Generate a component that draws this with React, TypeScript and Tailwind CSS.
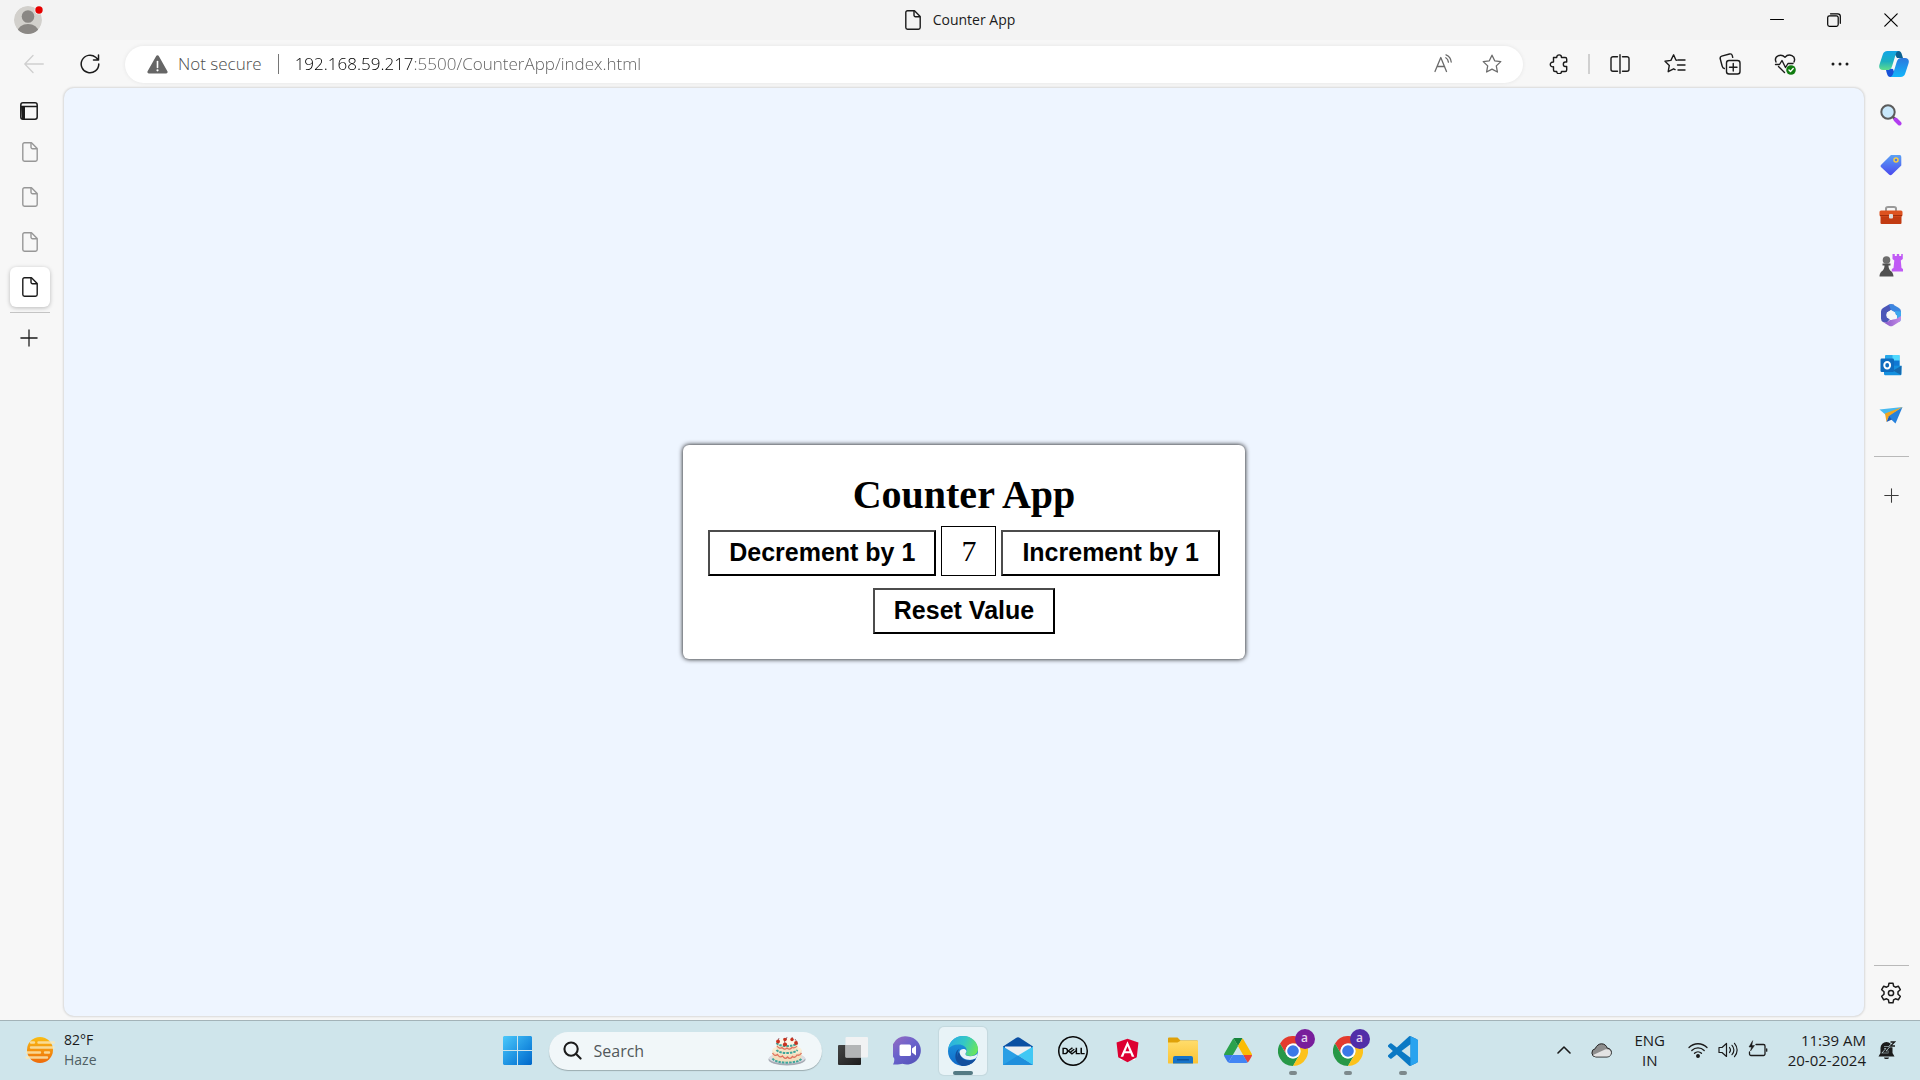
import { useState, type ReactNode } from "react";
import { FaAngular } from "react-icons/fa";
import { SiDell } from "react-icons/si";

function Line({ children, size = 20, w = 1.3, box = 20, label }: { children: ReactNode; size?: number; w?: number; box?: number; label?: string }) {
  return (
    <svg width={size} height={size} viewBox={`0 0 ${box} ${box}`} fill="none" stroke="currentColor" strokeWidth={w} strokeLinecap="round" strokeLinejoin="round" aria-label={label}>
      {children}
    </svg>
  );
}

const STAR = "M10 1.200l2.700 5.600 6.100.8-4.500 4.300 1.100 6.100L10 15.100 4.600 18l1.100-6.100L1.200 7.600l6.100-.8z";

function PageIcon() {
  return (
    <svg width="16" height="20" viewBox="0 0 16 20" fill="none" stroke="currentColor" strokeWidth="1.4" strokeLinejoin="round" aria-hidden="true">
      <path d="M2.500.8h7L15.200 6.500v11a1.700 1.700 0 0 1-1.700 1.700h-11A1.700 1.700 0 0 1 .8 17.500v-15A1.700 1.700 0 0 1 2.500.8z" />
      <path d="M9 1v4.300A1.500 1.500 0 0 0 10.500 6.800H15" />
    </svg>
  );
}

function PlusIcon({ size }: { size: number }) {
  return <Line size={size} w={1.4}><path d="M10 1v18M1 10h18" /></Line>;
}

function TitleBar() {
  return (
    <header className="grid h-10 shrink-0 grid-cols-[1fr_auto_1fr] items-center bg-[#f3f3f3]">
      <button aria-label="Profile" className="ml-3.5 w-8">
        <svg width="32" height="32" viewBox="0 0 32 32">
          <defs><clipPath id="avatar"><circle cx="14" cy="16" r="14" /></clipPath></defs>
          <g clipPath="url(#avatar)">
            <circle cx="14" cy="16" r="14" fill="#d2d0cc" />
            <circle cx="14" cy="12.500" r="6.300" fill="#8a8784" />
            <ellipse cx="14" cy="28" rx="10.500" ry="8" fill="#8a8784" />
          </g>
          <circle cx="25" cy="6" r="4.500" fill="#f3f3f3" />
          <circle cx="25" cy="6" r="3.700" fill="#e60000" />
        </svg>
      </button>
      <div className="flex items-center gap-3 text-[#1b1b1b]">
        <PageIcon />
        <span className="text-sm">Counter App</span>
      </div>
      <div className="flex justify-end pr-px">
        <button aria-label="Minimize" className="flex h-10 w-[57px] items-center justify-center"><Line size={14} box={14} w={1}><path d="M.5 6.500h13" /></Line></button>
        <button aria-label="Restore" className="flex h-10 w-[57px] items-center justify-center">
          <Line size={14} box={14} w={1.200}><rect x=".7" y="2.800" width="10.500" height="10.500" rx="1.800" /><path d="M3.500.8h7.300a2.500 2.500 0 0 1 2.500 2.500v7" /></Line>
        </button>
        <button aria-label="Close" className="flex h-10 w-[57px] items-center justify-center"><Line size={14} box={14} w={1.200}><path d="M.8.8l12.400 12.400M13.200.8L.8 13.200" /></Line></button>
      </div>
    </header>
  );
}

function ToolButton({ label, children }: { label: string; children: ReactNode }) {
  return <button aria-label={label} className="flex h-9 w-[55px] items-center justify-center text-[#1b1b1b]">{children}</button>;
}

function Toolbar() {
  return (
    <nav className="flex h-12 shrink-0 items-center bg-[#f7f7f7]">
      <button aria-label="Back" className="ml-1.5 flex w-14 justify-center text-[#cfcfcf]"><Line w={1.300}><path d="M19.300 10H.8M9 1.500L.8 10 9 18.500" /></Line></button>
      <button aria-label="Refresh" className="flex w-14 justify-center text-[#1b1b1b]"><Line w={1.500}><path d="M18.800 10A8.800 8.800 0 1 1 15.700 3.300L18.500 6M18.500 1v5h-5" /></Line></button>
      <div className="ml-[7px] flex h-[37px] flex-1 items-center rounded-full bg-white shadow-[0_0_4px_rgba(0,0,0,0.08)]">
        <button className="ml-[22px] flex items-center gap-2.5 text-[17px] font-light text-[#4d4d4d]">
          <svg width="21" height="19" viewBox="0 0 21 19" aria-hidden="true">
            <path d="M9.200 1.100a1.500 1.500 0 0 1 2.600 0l8.600 15.200a1.500 1.500 0 0 1-1.300 2.200H1.900A1.500 1.500 0 0 1 .6 16.300z" fill="#666" />
            <path d="M10.500 6.500v6" stroke="#fff" strokeWidth="1.600" strokeLinecap="round" /><circle cx="10.500" cy="15.300" r="1.100" fill="#fff" />
          </svg>
          Not secure
        </button>
        <span className="mx-4 h-5 w-px bg-[#767676]" />
        <input
          aria-label="Address"
          defaultValue="192.168.59.217:5500/CounterApp/index.html"
          className="min-w-0 flex-1 bg-[linear-gradient(to_right,#000_118px,#5c5c5c_118px)] bg-clip-text text-[17px] font-light text-transparent outline-none"
        />
        <button aria-label="Read aloud" className="flex w-12 justify-center text-[#6b6b6b]">
          <Line w={1.300}><path d="M1 17.500L6.800 3.500 12.500 17.500M3 12.500h7.600" /><path d="M11.800 3.800c1.700 1 2.400 2.500 2.600 4.300M12 .8c2.900 1.200 4.900 3.500 5.200 7.200" /></Line>
        </button>
        <button aria-label="Add to favorites" className="mr-[7px] flex w-12 justify-center text-[#6b6b6b]"><Line w={1.300}><path d={STAR} /></Line></button>
      </div>
      <div className="ml-2 flex items-center">
        <ToolButton label="Extensions">
          <Line w={1.400}><path d="M4.500 3.500h3.200c0-3.500 4.800-3.500 4.800 0h3.700a1.500 1.500 0 0 1 1.500 1.500v3h-1.500c-2.500 0-2.500 4.500 0 4.500h1.500V16a1.500 1.500 0 0 1-1.500 1.500h-3.700c0 3-4.800 3-4.800 0H6A1.500 1.500 0 0 1 4.500 16v-3.200c-4.300.6-4.300-5.200 0-4.800z" /></Line>
        </ToolButton>
        <span className="mx-0.5 h-5 w-0.5 bg-[#d0d0d0]" />
        <ToolButton label="Split screen"><Line w={1.400}><path d="M7.500 2.700H3A2 2 0 0 0 1 4.700v10.600a2 2 0 0 0 2 2h4.500M12.500 2.700H17a2 2 0 0 1 2 2v10.600a2 2 0 0 1-2 2h-4.500M10 .8v18.400" /></Line></ToolButton>
        <ToolButton label="Favorites">
          <Line size={22} box={22} w={1.400}><path d="M13 7.200L11.900 7 9.600 1.800 6.900 7.400l-5.900.8 4.300 4.200-1.100 6.300 5.400-2.900 1.500.8" /><path d="M14 7h7M13.500 12H21M14 17h7" /></Line>
        </ToolButton>
        <ToolButton label="Collections">
          <Line size={22} box={22} w={1.400}><rect x="7.500" y="7.500" width="13.500" height="13.500" rx="2.500" /><path d="M14.250 10.500v7.500M10.500 14.250H18M5.300 15.500c-1.300-.3-1.800-1-2.100-2.300L1.200 5.800c-.3-1.400.2-2.300 1.500-2.700l7.800-2.100c1.400-.4 2.400.2 2.800 1.600l.4 1.700" /></Line>
        </ToolButton>
        <ToolButton label="Browser essentials">
          <Line size={22} box={22} w={1.400}>
            <path d="M2 9C-.5 3 7 .2 11 4.200 15-.2 22.500 3 20 9M4.500 13.500l6 6M1.500 11.500h4l2.500-4 3.500 7 2.500-4h5" />
            <circle cx="17" cy="17" r="4.800" fill="#107c10" stroke="none" /><path d="M15 17l1.500 1.500 2.700-2.900" stroke="#fff" />
          </Line>
        </ToolButton>
        <ToolButton label="Settings and more"><svg width="20" height="20" viewBox="0 0 20 20" fill="currentColor"><circle cx="3" cy="10" r="1.500" /><circle cx="10" cy="10" r="1.500" /><circle cx="17" cy="10" r="1.500" /></svg></ToolButton>
        <button aria-label="Copilot" className="flex w-[53px] justify-center">
          <svg width="30" height="28" viewBox="0 0 30 28">
            <defs>
              <linearGradient id="cp1" x1="0" y1="0" x2="0" y2="1"><stop stopColor="#12a5e6" /><stop offset=".55" stopColor="#1db0c0" /><stop offset="1" stopColor="#5fdd8b" /></linearGradient>
              <linearGradient id="cp2" x1="0" y1="0" x2="0" y2="1"><stop stopColor="#2d78dd" /><stop offset="1" stopColor="#12b6fb" /></linearGradient>
            </defs>
            <path d="M14 1h5.500c2 0 2.800 1.500 3.400 3.500L24 8h-6z" fill="#0c6191" />
            <path d="M8 20c1 0 2-.4 2.400-1.600L14 19l3 8h-5.500c-2.500 0-3.200-2-3.900-4.500L7 20z" fill="#1752d8" />
            <path d="M8.500 1H20c-1.700 0-2.700 1.200-3.300 3.200l-3.500 11.500C12.300 18.600 11 20 8.500 20H4c-3.200 0-4.500-2.400-3.500-5.500L3.700 4.700C4.500 2.200 6 1 8.500 1z" fill="url(#cp1)" />
            <path d="M21.500 27H10.800c1.700 0 2.700-1.200 3.300-3.200l3.500-11.500c.8-2.900 2.300-4.300 4.700-4.300H26c3.200 0 4.500 2.400 3.500 5.500l-3.200 9.800c-.8 2.500-2.300 3.700-4.800 3.700z" fill="url(#cp2)" />
          </svg>
        </button>
      </div>
    </nav>
  );
}

function TabRail() {
  return (
    <aside className="flex w-16 shrink-0 flex-col items-center pr-1 text-[#1b1b1b]">
      <button aria-label="Tab actions" className="mt-3.5 mr-0.5">
        <svg width="18" height="18" viewBox="0 0 18 18" fill="none" stroke="currentColor" strokeWidth="1.500"><rect x=".8" y=".8" width="16.400" height="16.400" rx="2.200" /><path d="M1 4.500h16" /><path d="M1 4.500h4v12.700H2z" fill="currentColor" stroke="none" /></svg>
      </button>
      <div className="mt-3 flex flex-col gap-[5px]">
        {[1, 2, 3].map((n) => (
          <button key={n} aria-label={`Tab ${n}`} className="flex size-10 items-center justify-center text-[#979797]"><PageIcon /></button>
        ))}
        <button aria-label="Counter App tab" className="flex size-10 items-center justify-center rounded-md bg-white shadow-[0_1px_4px_rgba(0,0,0,0.25)]"><PageIcon /></button>
      </div>
      <span className="mt-[5px] h-px w-10 bg-[#c4c4c4]" />
      <button aria-label="New tab" className="mt-4 mr-0.5"><PlusIcon size={18} /></button>
    </aside>
  );
}

function CounterCard() {
  const [value, setValue] = useState(7);
  const button = "h-[46px] border-2 border-t-[#4c4c4c] border-r-black border-b-black border-l-[#4c4c4c] bg-white px-[19px] pb-0.5 font-['Liberation_Sans',sans-serif] text-[25px] leading-8 font-bold text-black";
  return (
    <section className="flex flex-col items-center rounded-[6px] bg-white p-[25px] font-['Liberation_Serif',serif] text-black shadow-[0_0_5px_black]">
      <h1 className="text-[40px] leading-[50px] font-bold">Counter App</h1>
      <div className="mt-1.5 flex items-end gap-[5px]">
        <button className={button} onClick={() => setValue(value - 1)}>Decrement by 1</button>
        <output className="flex h-[50px] items-center border border-black px-[19px] pb-0.5 text-[30px]">{value}</output>
        <button className={button} onClick={() => setValue(value + 1)}>Increment by 1</button>
      </div>
      <button className={`${button} mt-3`} onClick={() => setValue(0)}>Reset Value</button>
    </section>
  );
}

function SearchTool() {
  return (
    <svg width="22" height="22" viewBox="0 0 22 22">
      <path d="M13 13l2 2" stroke="#555" strokeWidth="2.500" /><path d="M15.500 15.500l4 4" stroke="#b23df0" strokeWidth="4" strokeLinecap="round" />
      <circle cx="8" cy="8" r="6.700" fill="#c9e8fb" stroke="#5b5b5b" strokeWidth="2" />
    </svg>
  );
}
function ShoppingTag() {
  return (
    <svg width="22" height="22" viewBox="0 0 22 22">
      <defs><linearGradient id="tag" x2="0" y2="1"><stop stopColor="#5ba1f5" /><stop offset="1" stopColor="#4a49ee" /></linearGradient></defs>
      <path d="M11 1h8.500A1.800 1.800 0 0 1 21.300 3v8.500L12 20.500c-1 1-2 1-3 0L1.200 13.300c-.8-.8-.8-1.700 0-2.500z" fill="url(#tag)" /><circle cx="16" cy="6" r="2" fill="#5578df" stroke="#f7cd43" strokeWidth="1.500" />
    </svg>
  );
}
function Toolbox() {
  return (
    <svg width="24" height="20" viewBox="0 0 24 20">
      <path d="M7 6V3.500Q7 2 9 2h6q2 0 2 1.500V6" fill="none" stroke="#9a9a9a" strokeWidth="2" /><rect x="1.500" y="10" width="21" height="9" rx="1" fill="#c23b12" />
      <rect x=".5" y="5.500" width="23" height="6" rx="1.500" fill="#dd5220" /><path d="M1 10.500h22" stroke="#a42f0c" /><rect x="10" y="9" width="4" height="4.500" rx="1" fill="#ddd" />
    </svg>
  );
}
function Games() {
  return (
    <svg width="24" height="24" viewBox="0 0 24 24">
      <path d="M13.500 1h2.300v2h2V1h2.400v2h2V1h1.600v5l-2 1.500L22.500 15l1.500 1v2.500H12.800V16l1.700-1 .8-7.500-1.800-1.500z" fill="#c05af5" />
      <circle cx="7.500" cy="7" r="3.800" fill="#6d6d6d" /><path d="M3.500 10.500h8v2h-2c.2 3.500 1 4.500 3.500 6.500.7 1.500 1.500 2.500 1.500 4.500H.5c0-2 .6-3 1.500-4.500 2.500-2 3.300-3 3.500-6.500h-2z" fill="#505050" />
    </svg>
  );
}
function Office() {
  return (
    <svg width="22" height="24" viewBox="0 0 22 24">
      <defs><linearGradient id="off" x2="1" y2="0"><stop stopColor="#8457c8" /><stop offset="1" stopColor="#c58be6" /></linearGradient></defs>
      <path d="M9 1.500L3 5Q1 6.200 1 8.500v7q0 2.300 2 3.500l4 .5 3-3.500-4-4 5-5L14 1.500z" fill="#4b56b8" />
      <path d="M9 1.500q2-1 4 0l6 3.500q2 1.200 2 3.500v3l-4 1-6-5z" fill="#3d86e0" />
      <path d="M14 8l3 4v6l2 1q2-1.200 2-3.500v-7z" fill="#3da9ee" />
      <path d="M21 13v2.500q0 2.300-2 3.500l-6 3.700q-2 1-4 0L3 19q4.500 1 7-2l6-1z" fill="url(#off)" />
      <path d="M11 7.500l3.900 2.250v4.500L11 16.500l-3.900-2.250v-4.500z" fill="#f7f7f7" stroke="#f7f7f7" strokeLinejoin="round" />
    </svg>
  );
}
function Outlook() {
  return (
    <svg width="22" height="22" viewBox="0 0 22 22">
      <path d="M6 1h12.500a1 1 0 0 1 1 1v11H5V2a1 1 0 0 1 1-1z" fill="#28a8ea" /><path d="M12.500 1h7v6h-7z" fill="#50d9ff" /><path d="M12.500 6.500h7V13h-7z" fill="#0f78d4" />
      <path d="M4 11.500l17.500.3V20a1.200 1.200 0 0 1-1.200 1.200H5A1.200 1.200 0 0 1 4 20z" fill="#1490df" /><path d="M21.500 11.800L13 16.500l8 4.500z" fill="#1669ae" />
      <rect x=".5" y="4.500" width="13.500" height="13.500" rx="1.200" fill="#0f6cbf" /><ellipse cx="7.200" cy="11.200" rx="2.900" ry="3.300" fill="none" stroke="#fff" strokeWidth="2" />
    </svg>
  );
}
function Drop() {
  return (
    <svg width="24" height="18" viewBox="0 0 24 18">
      <path d="M.5 3.500L23.500 1l-16 8.500z" fill="#48b9ef" /><path d="M23.500 1L16.500 17.500 8.500 10z" fill="#2580dc" /><path d="M23.500 1L6 7.500 7.500 16l2.500-6z" fill="#f2a51e" /><path d="M7.500 16l2.500-6 3 3.500z" fill="#1c5bb5" />
    </svg>
  );
}

function SideBar() {
  const tools: [string, ReactNode][] = [
    ["Search", <SearchTool />], ["Shopping", <ShoppingTag />], ["Tools", <Toolbox />], ["Games", <Games />],
    ["Microsoft 365", <Office />], ["Outlook", <Outlook />], ["Drop", <Drop />],
  ];
  return (
    <aside className="flex w-14 shrink-0 flex-col items-center pr-0.5 text-[#3b3b3b]">
      <div className="mt-0.5 flex flex-col">
        {tools.map(([label, icon]) => (
          <button key={label} aria-label={label} className="flex h-[50px] w-12 items-center justify-center">{icon}</button>
        ))}
      </div>
      <span className="mt-4 h-px w-[35px] bg-[#b9b9b9]" />
      <button aria-label="Customize" className="mt-[31px]"><PlusIcon size={15} /></button>
      <span className="mt-auto h-px w-[35px] bg-[#b9b9b9]" />
      <button aria-label="Settings" className="mt-4 mb-4 text-[#1b1b1b]">
        <Line size={22} box={22} w={1.500}>
          <path d="M9 1.200h4l.6 3 1.800 1 2.900-1 2 3.500-2.300 2v2.600l2.300 2-2 3.500-2.900-1-1.800 1-.6 3H9l-.6-3-1.800-1-2.900 1-2-3.500 2.300-2V9.700l-2.300-2 2-3.500 2.900 1 1.800-1z" /><circle cx="11" cy="11" r="2.600" />
        </Line>
      </button>
    </aside>
  );
}

function TaskSlot({ label, children, active, running }: { label: string; children: ReactNode; active?: boolean; running?: boolean }) {
  return (
    <button aria-label={label} className={`relative flex size-12 items-center justify-center rounded-[5px] ${active ? "bg-[#e8f3f7] shadow-[0_0_1px_1px_rgba(0,0,0,0.06)]" : ""}`}>
      {children}
      {active && <span className="absolute bottom-0 left-1/2 h-1 w-5 -translate-x-1/2 rounded-full bg-[#547a84]" />}
      {running && <span className="absolute bottom-0 left-1/2 h-1 w-2 -translate-x-1/2 rounded-full bg-[#7d898c]" />}
    </button>
  );
}

function Chrome({ badge }: { badge: string }) {
  return (
    <>
      <svg width="30" height="30" viewBox="0 0 48 48">
        <path d="M24 12h20.800A24 24 0 0 0 3.200 12l10.400 18A12 12 0 0 1 24 12z" fill="#e33b2e" /><path d="M3.200 12A24 24 0 0 0 24 48l10.400-18a12 12 0 0 1-20.800 0z" fill="#279847" />
        <path d="M44.800 12A24 24 0 0 1 24 48l10.400-18A12 12 0 0 0 24 12z" fill="#fcc21b" /><circle cx="24" cy="24" r="12" fill="#fff" /><circle cx="24" cy="24" r="9.300" fill="#3b78e7" />
      </svg>
      <span className={`absolute top-0.5 right-0.5 flex size-5 items-center justify-center rounded-full pb-0.5 text-xs font-semibold text-[#e4d5f0] ${badge}`}>a</span>
    </>
  );
}

function Cake() {
  return (
    <svg width="38" height="30" viewBox="0 0 38 30">
      <ellipse cx="19" cy="23.500" rx="18.500" ry="6" fill="#a7abb4" /><ellipse cx="19" cy="22.300" rx="18" ry="5.300" fill="#dcdde4" />
      <path d="M4.500 14v8c2 6 27 6 29 0v-8z" fill="#f2dfbe" /><ellipse cx="19" cy="14" rx="14.500" ry="4.500" fill="#fbeed6" />
      <path d="M8.500 6.500V14c2 4.500 19 4.500 21 0V6.500z" fill="#f3e2c4" /><ellipse cx="19" cy="6.500" rx="10.500" ry="4" fill="#fdf5e6" />
      <path d="M4.500 17q2.500 4 5 1.500 2.500 4 5 1.500 2.500 4 5 1 2.500 3 5-.5 2.500 2 4.500-1.500 2.500 1 4.500-2" fill="none" stroke="#e0705c" strokeWidth="1.300" />
      <path d="M9 10q2.500 3.500 5 1.500 2.500 3 5 .5 2.500 2.500 5-.5 3 1 5-1.500" fill="none" stroke="#e0705c" strokeWidth="1.200" />
      <path d="M4.500 22.500c3 5.500 26 5.500 29 0M8.500 14c3 4 18 4 21 0M8.500 7c3 4 18 4 21 0" fill="none" stroke="#3fa69b" strokeWidth="2" strokeDasharray="2.500 1" />
      <path d="M10 5l1-3M17 8l-1-6M18 4l1-3M25 4l-1-3M29 6l-2-3" stroke="#734" strokeWidth=".7" />
      <g fill="#c8321f"><circle cx="10" cy="5.500" r="1.900" /><circle cx="17" cy="8.500" r="2.100" /><circle cx="17" cy="3.500" r="1.700" /><circle cx="24" cy="3.500" r="1.700" /><circle cx="28" cy="7" r="1.900" /></g>
    </svg>
  );
}

function Taskbar() {
  return (
    <footer className="grid h-[60px] shrink-0 grid-cols-[1fr_auto_1fr] items-center border-t border-[#a3b3b8] bg-[#cfe5eb] text-[#1b1b1b]">
      <button className="ml-[25px] flex items-center gap-[9px] justify-self-start pb-0.5 text-left">
        <svg width="30" height="28" viewBox="0 0 30 28" aria-hidden="true">
          <defs><linearGradient id="sun" x2="0" y2="1"><stop stopColor="#f9bd14" /><stop offset="1" stopColor="#ee6a0b" /></linearGradient></defs>
          <circle cx="15" cy="14" r="13" fill="url(#sun)" />
          <g stroke="#fbe9b4" strokeWidth="2.400" strokeLinecap="round" opacity=".8"><path d="M6 6.500h3M13.500 6.500H29M6 11.500h22.500M2 16.500h13M20 16.500h4M1.500 21.500H22" /></g>
        </svg>
        <span className="flex flex-col text-sm leading-5"><span>82°F</span><span className="text-[#4f5f64]">Haze</span></span>
      </button>
      <div className="flex items-center gap-[7px]">
        <TaskSlot label="Start">
          <svg width="29" height="29" viewBox="0 0 29 29">
            <defs><linearGradient id="win" x2="1" y2="1"><stop stopColor="#4cc9fb" /><stop offset=".6" stopColor="#1a8ee0" /><stop offset="1" stopColor="#0067c9" /></linearGradient></defs>
            <path d="M1 0h13v14H0V1zM15 0h13l1 1v13H15zM0 15h14v14H1l-1-1zM15 15h14v13l-1 1H15z" fill="url(#win)" />
          </svg>
        </TaskSlot>
        <label className="flex h-[38px] w-[273px] items-center rounded-full bg-[#f1f7f9] pr-4 pl-3.5 shadow-[0_1px_1px_rgba(0,0,0,0.25)]">
          <Line size={19} w={2.200}><circle cx="8.500" cy="8.500" r="7" /><path d="M13.800 13.800L18.500 18.500" /></Line>
          <input type="search" aria-label="Search" placeholder="Search" className="ml-3 min-w-0 flex-1 bg-transparent text-base outline-none placeholder:text-[#51585b]" />
          <Cake />
        </label>
        <TaskSlot label="Task view">
          <svg width="30" height="28" viewBox="0 0 30 28">
            <defs><linearGradient id="tv" x2="1" y2="1"><stop stopColor="#444" /><stop offset="1" stopColor="#1c1c1c" /></linearGradient></defs>
            <rect y="8" width="23" height="20" rx="1" fill="url(#tv)" /><rect x="7.500" width="22.500" height="20.500" rx="1" fill="#f1f2f3" /><path d="M7.500 8H23v12.500H7.500z" fill="#b3b5b6" />
          </svg>
        </TaskSlot>
        <TaskSlot label="Chat">
          <svg width="29" height="29" viewBox="0 0 29 29">
            <defs><linearGradient id="chat" x1="0" x2=".8" y2="1"><stop stopColor="#9a6cc0" /><stop offset=".5" stopColor="#6a62cc" /><stop offset="1" stopColor="#5453b9" /></linearGradient></defs>
            <path d="M14.500.5a14 14 0 1 1-5 27.300c-2 .8-6 .8-9.500.7 1.200-2 1.500-4 1.200-6A14 14 0 0 1 14.500.5z" fill="url(#chat)" />
            <rect x="6.500" y="8.500" width="11.500" height="11.500" rx="1.500" fill="#fff" /><path d="M19 12.500l4-3v10l-4-3z" fill="#fff" />
          </svg>
        </TaskSlot>
        <TaskSlot label="Microsoft Edge" active>
          <svg width="30" height="30" viewBox="0 0 30 30">
            <defs>
              <linearGradient id="eg1" x1="0" y1=".3" x2="1" y2=".6"><stop stopColor="#2aaee5" /><stop offset=".5" stopColor="#34c8c5" /><stop offset="1" stopColor="#69e65a" /></linearGradient>
              <linearGradient id="eg2" x2="0" y2="1"><stop stopColor="#1f9de0" /><stop offset="1" stopColor="#1069c9" /></linearGradient>
            </defs>
            <circle cx="15" cy="15" r="15" fill="url(#eg2)" />
            <path d="M.3 12.800C1.500 5 7.500 0 15 0c9 0 15 6.500 15 13 0 4.500-3.500 7-7.500 7-3.500 0-5-1-5-2 0-.8 1.200-1.400 1.200-3.500 0-3.500-3.800-6-8-6C5.500 8.500 2 10.500.3 12.800z" fill="url(#eg1)" />
            <path d="M11.500 13c-2 2-3 5.500-1 9.500 2 4.500 7 5.500 10.500 5.200A15 15 0 0 1 15 30C10 29 6.500 24 7.500 18.500 8 15.500 9.500 13.500 11.500 13z" fill="#124f9e" />
            <path d="M11.500 15.500c.2 5 4 9 9 9 3 0 5-1 6.500-2 .6-.3 1 .2.7.8C25.500 27.300 20.500 30 15 30c-3-1-5.500-6-5.500-10 0-2 .8-3.700 2-4.500z" fill="#124f9e" />
            <path d="M11.500 16c.5-3.300 5-4 6.700-1.800.9 1.700-.8 2.600-.8 3.800 0 1.300 2 2.300 4.800 2.300 3.300 0 6-1.100 7.600-3-.3 2.700-1.500 4.700-2.400 5.200-2.300 1.200-4.700 1.700-7.200 1.300-4.600-.6-8.300-3.600-8.700-7.800z" fill="#e8f3f7" />
          </svg>
        </TaskSlot>
        <TaskSlot label="Mail">
          <svg width="30" height="28" viewBox="0 0 30 28">
            <path d="M0 9.500L13 1q2-1.300 4 0l13 8.500V14H0z" fill="#0a4fa3" /><path d="M2 9.500h26v12H2z" fill="#eceff2" /><path d="M0 9.500L30 28H0z" fill="#2a9fe5" /><path d="M30 9.500V28L15 18.500z" fill="#41c8f4" /><path d="M0 28l15-9.500L30 28z" fill="#1f8fdc" />
          </svg>
        </TaskSlot>
        <TaskSlot label="Dell"><SiDell size={30} color="#080808" /></TaskSlot>
        <TaskSlot label="Angular">
          <span className="relative flex"><span className="absolute inset-x-1.5 inset-y-1 bg-white" /><FaAngular size={27} color="#dd0031" className="relative" /></span>
        </TaskSlot>
        <TaskSlot label="File Explorer">
          <svg width="30" height="27" viewBox="0 0 30 27">
            <defs><linearGradient id="fold" x2="0" y2="1"><stop stopColor="#ffdc6a" /><stop offset="1" stopColor="#fbc334" /></linearGradient></defs>
            <path d="M0 1.500Q0 .5 1 .5h8.500l3 3H29q1 0 1 1V9H0z" fill="#dfa109" /><path d="M0 5.500h9.500l3-1.700H29q1 0 1 1V26q0 .5-1 .5H1q-1 0-1-.5z" fill="url(#fold)" />
            <path d="M5 26.500V21q0-2 2-2h16q2 0 2 2v5.500z" fill="#1673c8" /><path d="M9 22.800h12" stroke="#0c4a8f" strokeWidth="1.200" />
          </svg>
        </TaskSlot>
        <TaskSlot label="Google Drive">
          <svg width="28" height="25" viewBox="0 0 87.300 78">
            <path d="m6.600 66.850 3.850 6.650c.8 1.400 1.950 2.500 3.300 3.300l13.750-23.800h-27.500c0 1.550.4 3.100 1.200 4.500z" fill="#3d7bea" />
            <path d="m43.650 25-13.750-23.800c-1.350.8-2.500 1.900-3.300 3.300l-25.400 44a9.060 9.060 0 0 0-1.200 4.500h27.500z" fill="#2ba24c" />
            <path d="m73.550 76.800c1.350-.8 2.500-1.900 3.300-3.300l1.600-2.750 7.650-13.250c.8-1.400 1.200-2.950 1.200-4.500h-27.502l5.852 11.500z" fill="#ea4335" />
            <path d="m43.650 25 13.750-23.800c-1.350-.8-2.900-1.200-4.500-1.200h-18.500c-1.600 0-3.150.45-4.500 1.200z" fill="#16833c" />
            <path d="m59.800 53h-32.300l-13.750 23.800c1.350.8 2.900 1.200 4.500 1.200h50.800c1.600 0 3.150-.45 4.500-1.200z" fill="#4285f4" />
            <path d="m73.400 26.500-12.700-22c-.8-1.400-1.950-2.500-3.300-3.300l-13.750 23.800 16.150 28h27.450c0-1.550-.4-3.100-1.200-4.500z" fill="#fbbc04" />
          </svg>
        </TaskSlot>
        <TaskSlot label="Google Chrome, profile 1" running><Chrome badge="bg-[#781d9b]" /></TaskSlot>
        <TaskSlot label="Google Chrome, profile 2" running><Chrome badge="bg-[#512da8]" /></TaskSlot>
        <TaskSlot label="Visual Studio Code" running>
          <svg width="30" height="30" viewBox="0 0 24 24">
            <path d="M23.150 2.587L18.210.21a1.494 1.494 0 0 0-1.705.29l-9.460 8.630-4.120-3.128a.999.999 0 0 0-1.276.057L.327 7.261A1 1 0 0 0 .326 8.740L3.899 12 .326 15.260a1 1 0 0 0 .001 1.479L1.650 17.940a.999.999 0 0 0 1.276.057l4.120-3.128 9.460 8.630a1.492 1.492 0 0 0 1.704.290l4.942-2.377A1.500 1.500 0 0 0 24 20.060V3.939a1.500 1.500 0 0 0-.850-1.352zm-5.146 14.861L10.826 12l7.178-5.448v10.896z" fill="#0b79c4" />
            <path d="M18 .3l5.150 2.287A1.500 1.500 0 0 1 24 3.939V20.060a1.500 1.500 0 0 1-.85 1.352L18 23.700z" fill="#2aa3ef" />
          </svg>
        </TaskSlot>
      </div>
      <div className="mr-6 flex items-center justify-self-end pb-px">
        <button aria-label="Show hidden icons" className="mr-5"><Line size={14} box={14} w={1.600}><path d="M1 10l6-6 6 6" /></Line></button>
        <button aria-label="OneDrive" className="mr-[22px]">
          <svg width="21" height="15" viewBox="0 0 21 15"><path d="M5 14a4.200 4.200 0 0 1-.8-8.300C5.500 2.500 8 .8 10.500.8c3 0 5 1.900 5.700 4.300C19 5.300 20.400 7.300 20.400 9.500A4.500 4.500 0 0 1 16 14z" fill="#8d8d8d" stroke="#222" /><path d="M2 12l12-5.500c3-.8 5.800.5 5.900 3A4 4 0 0 1 16 13.500H5c-1.500 0-2.500-.6-3-1.500z" fill="#e3e3e3" /></svg>
        </button>
        <button className="mr-[22px] flex w-8 flex-col items-center text-[15px] leading-5"><span>ENG</span><span>IN</span></button>
        <button aria-label="Network, volume and battery" className="mr-5 flex items-center gap-2.5">
          <Line size={20} w={1.300}><path d="M1 7.500c5-5 13-5 18 0M3.800 10.500c3.500-3.500 8.900-3.500 12.400 0M6.500 13.300c2-2 5-2 7 0" /><circle cx="10" cy="16" r="1.300" fill="currentColor" /></Line>
          <Line size={20} w={1.200}><path d="M1 7.500h3l4.500-4v13L4 12.500H1zM11.500 7.500c1.200 1.500 1.200 3.500 0 5M14 5.300c2.500 2.700 2.500 6.700 0 9.400M16.500 3.300c3.500 4 3.500 9.400 0 13.400" /></Line>
          <Line size={20} w={1.300}><path d="M8 4.500h7.500A1.500 1.500 0 0 1 17 6v8a1.500 1.500 0 0 1-1.500 1.500H3A1.500 1.500 0 0 1 1.500 14v-2M18.700 8.800v2.400" /><path d="M4.500 1L1 7h2.500l-1 4L6.500 5.500H4z" fill="currentColor" strokeWidth=".5" /></Line>
        </button>
        <button className="mr-3 flex flex-col items-end text-[15px] leading-5"><span>11:39 AM</span><span>20-02-2024</span></button>
        <button aria-label="Notifications">
          <svg width="18" height="20" viewBox="0 0 18 20"><path d="M2.500 8a6 6 0 0 1 12 0v5l2 3.500H.5l2-3.500zM6 17.500h5c0 2-5 2-5 0z" fill="#1b1b1b" /><path d="M6 7.500h4l-4 4.500h4.500M12.500 2h4l-4 4h4.500" fill="none" stroke="#cfe5eb" strokeWidth="2.400" /><path d="M6 7.500h4l-4 4.500h4.500M12.500 2h4l-4 4h4.500" fill="none" stroke="#1b1b1b" strokeWidth="1.300" /></svg>
        </button>
      </div>
    </footer>
  );
}

export default function App() {
  return (
    <div className="flex h-screen flex-col overflow-hidden bg-[#f7f7f7] font-['Open_Sans',sans-serif]">
      <TitleBar />
      <Toolbar />
      <div className="flex min-h-0 flex-1">
        <TabRail />
        <main className="mb-1 flex flex-1 items-center justify-center rounded-[10px] bg-[#eef5ff] shadow-[0_0_2px_1px_rgba(0,0,0,0.12)]">
          <CounterCard />
        </main>
        <SideBar />
      </div>
      <Taskbar />
    </div>
  );
}
